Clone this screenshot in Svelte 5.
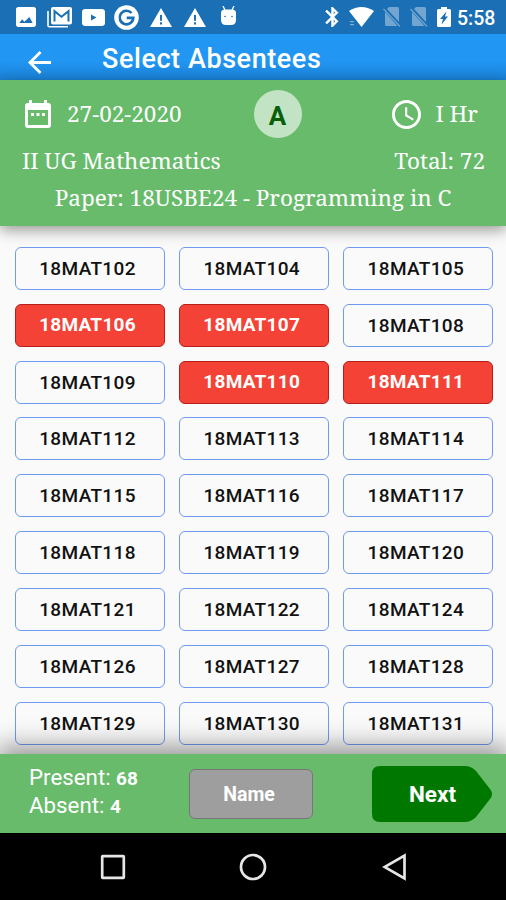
<script>
  const absent = new Set([106, 107, 110, 111]);
  const numbers = [
    102, 104, 105, 106, 107, 108, 109, 110, 111, 112, 113, 114, 115, 116, 117,
    118, 119, 120, 121, 122, 124, 126, 127, 128, 129, 130, 131
  ];
  const warning = 'M1 21L12 2l11 19zm12-2.500v-2.200h-2v2.200zm0-3.700V9h-2v5.800z';
</script>

<div class="screen">
  <div class="status">
    <div class="icons left">
      <svg class="photo" viewBox="3 3 18 18"><path d="M21 19V5c0-1.1-.9-2-2-2H5c-1.1 0-2 .9-2 2v14c0 1.1.9 2 2 2h14c1.1 0 2-.9 2-2zM6 17.500l2.500-3.500 2 2.200 1.500-1.200 3-3 3 5.500z" /></svg>
      <svg class="gmail" viewBox="0 0 25 21">
        <path d="M1 4v14.500a1.300 1.300 0 0 0 1.300 1.300H21" fill="none" stroke="#fff" stroke-width="1.600" />
        <rect x="4" y="0" width="21" height="17.500" rx="2" />
        <path d="M7.500 14.500V4.200l7 5.600 7-5.600v10.300" fill="none" stroke="#1b6fb5" stroke-width="2" />
      </svg>
      <svg class="tube" viewBox="0 0 23 17"><path fill-rule="evenodd" d="M3.500 0h16Q23 0 23 3v11q0 3-3.500 3h-16Q0 17 0 14V3Q0 0 3.500 0zM9 5.500v6l5.500-3z" /></svg>
      <svg class="google" viewBox="0 0 25 25">
        <circle cx="12.500" cy="12.500" r="12.300" />
        <path d="M17.600 8A6.800 6.800 0 1 0 19.300 12.900H12.700" fill="none" stroke="#1b6fb5" stroke-width="2.600" />
      </svg>
      <svg class="warn first" viewBox="1 2 22 19"><path fill-rule="evenodd" d={warning} /></svg>
      <svg class="warn" viewBox="1 2 22 19"><path fill-rule="evenodd" d={warning} /></svg>
      <svg class="robot" viewBox="0 0 17 20">
        <path d="M3 0l2 4M14 0l-2 4" stroke="#fff" stroke-width="1.300" />
        <path d="M1 7q0-3.500 4-3.500h7q4 0 4 3.500v7q0 5-5 5H6q-5 0-5-5z" />
        <circle cx="5" cy="10.500" r=".8" fill="#1b6fb5" /><circle cx="12" cy="10.500" r=".8" fill="#1b6fb5" />
      </svg>
    </div>
    <div class="icons right">
      <svg class="bt" viewBox="4.500 2 14 20"><path d="M17.710 7.710L12 2h-1v7.590L6.410 5 5 6.410 10.590 12 5 17.590 6.410 19 11 14.410V22h1l5.710-5.710-4.300-4.290 4.300-4.290zM13 5.830l1.880 1.880L13 9.590V5.830zm1.880 10.460L13 18.170v-3.760l1.880 1.880z" stroke="#fff" stroke-width=".5" /></svg>
      <svg class="wifi" viewBox="0 0 25 20"><path d="M0 4Q12.500-4 25 4L12.500 20z" /><path d="M1 14h4v1.300H1zM1 17h4v1.300H1z" opacity=".45" /></svg>
      {#each [0, 1] as sim (sim)}
        <svg class="sim" viewBox="0 0 18 20"><path d="M6 0h8.500q1.500 0 1.500 1.500V15L4 2zM2 5l12.500 14H3.500Q2 19 2 17.500z" /><path d="M.5 2L17 19.500" stroke="#fff" stroke-width="1.200" /></svg>
      {/each}
      <svg class="battery" viewBox="0 0 14 20"><path fill-rule="evenodd" d="M4 0h6v2h2.500Q14 2 14 3.500v15q0 1.500-1.500 1.500h-11Q0 20 0 18.500v-15Q0 2 1.500 2H4zM9.500 4.500L3 12h3l-1.500 5.500 6.500-8H8z" /></svg>
      <span class="clock">5:58</span>
    </div>
  </div>

  <header>
    <svg class="back" viewBox="4 4 16 16"><path d="M20 11H7.830l5.590-5.590L12 4l-8 8 8 8 1.410-1.410L7.830 13H20v-2z" /></svg>
    <h1>Select Absentees</h1>
  </header>

  <section class="info">
    <div class="line top">
      <div class="item">
        <svg class="cal" viewBox="0 0 26 28"><path fill-rule="evenodd" d="M4 0h3v3h12V0h3v3h1q3 0 3 3v19q0 3-3 3H3q-3 0-3-3V6q0-3 3-3h1zM3 10v15h20V10zM6 13h3v3H6zM11.500 13h3v3h-3zM17 13h3v3h-3z" /></svg>
        <span>27-02-2020</span>
      </div>
      <div class="badge">A</div>
      <div class="item">
        <svg class="time" viewBox="2 2 20 20"><path d="M11.990 2C6.470 2 2 6.480 2 12s4.470 10 9.990 10C17.520 22 22 17.520 22 12S17.520 2 11.990 2zM12 20c-4.420 0-8-3.580-8-8s3.580-8 8-8 8 3.580 8 8-3.580 8-8 8zm.5-13H11v6l5.250 3.150.75-1.230-4.500-2.670z" /></svg>
        <span>I Hr</span>
      </div>
    </div>
    <div class="line second"><span>II UG Mathematics</span><span>Total: 72</span></div>
    <div class="line paper"><span>Paper: 18USBE24 - Programming in C</span></div>
  </section>

  <main>
    {#each numbers as n (n)}
      <button class:absent={absent.has(n)}>18MAT{n}</button>
    {/each}
  </main>

  <footer>
    <div class="counts">
      <div>Present: <b>68</b></div>
      <div>Absent: <b>4</b></div>
    </div>
    <button class="name">Name</button>
    <button class="next">
      <svg viewBox="0 0 121 56"><path d="M8 0H93Q99 0 104 5L118 23Q122 28 118 33L104 51Q99 56 93 56H8Q0 56 0 48V8Q0 0 8 0z" /></svg>
      <span>Next</span>
    </button>
  </footer>

  <nav>
    <svg viewBox="0 0 26 26"><rect x="2.200" y="2.200" width="21.600" height="21.600" rx=".5" /></svg>
    <svg viewBox="0 0 28 28"><circle cx="14" cy="14" r="12" /></svg>
    <svg viewBox="0 0 25 28"><path d="M22.500 2.500v23L2.500 14z" /></svg>
  </nav>
</div>

<style>
  .screen {
    width: 506px;
    height: 900px;
    overflow: hidden;
    display: flex;
    flex-direction: column;
    background: #fafafa;
    font-family: Roboto, sans-serif;
    color: #fff;
  }
  svg { display: block; flex: none; fill: #fff; }
  button { font-family: inherit; padding: 0; cursor: pointer; }
  .status {
    height: 34px;
    flex: none;
    display: flex;
    justify-content: space-between;
    background: #1b6fb5;
  }
  .icons { display: flex; align-items: center; }
  .left { padding-left: 16px; }
  .photo { width: 20px; }
  .gmail { width: 25px; margin-left: 11px; }
  .tube { width: 23px; margin-left: 10px; }
  .google { width: 25px; margin-left: 9px; }
  .warn { width: 22px; margin-left: 12px; }
  .warn.first { margin-left: 11px; }
  .robot { width: 17px; margin: -2px 0 0 14px; }
  .right { padding-right: 11px; }
  .bt { width: 14px; }
  .wifi { width: 25px; margin-left: 10px; }
  .sim { width: 18px; margin-left: 9px; opacity: .38; }
  .battery { width: 14px; margin-left: 9px; }
  .clock { margin-left: 6px; width: 38px; font-size: 19.500px; font-weight: 500; line-height: 34px; padding-top: 3px; white-space: nowrap; }

  header {
    height: 46px;
    flex: none;
    display: flex;
    background: linear-gradient(#2196f3, #2196f3 58%, #1b82d6);
  }
  .back { width: 23px; height: 23px; margin: 17px 0 0 28px; }
  h1 { margin: 9px 0 0 51px; font-size: 27px; line-height: 32px; font-weight: 500; letter-spacing: .57px; white-space: nowrap; }

  .info {
    height: 146px;
    flex: none;
    box-sizing: border-box;
    padding-top: 10px;
    background: #68bb6b;
    box-shadow: 0 4px 14px rgba(0, 0, 0, .4);
    font: 22.500px/30px "Noto Serif", "DejaVu Serif Condensed", "DejaVu Serif", serif;
    font-stretch: condensed;
    z-index: 1;
  }
  .line { display: flex; justify-content: space-between; white-space: nowrap; }
  .top { height: 48px; align-items: center; padding: 0 28px 0 25px; }
  .item { display: flex; align-items: center; }
  .item span { margin-top: -1px; }
  .cal { width: 26px; margin-right: 16px; }
  .badge {
    width: 48px;
    height: 48px;
    margin-right: 19px;
    border-radius: 50%;
    background: #c3e4c4;
    color: #075e0b;
    font: 700 26px/52px Roboto, sans-serif;
    text-align: center;
  }
  .time { width: 29px; margin-right: 14px; }
  .second { margin-top: 8px; padding: 0 21px 0 22px; }
  .paper { justify-content: center; margin-top: 7px; }

  main {
    height: 528px;
    flex: none;
    box-sizing: border-box;
    padding: 20.800px 13px 0 14.500px;
    display: grid;
    grid-template-columns: repeat(3, 150px);
    grid-auto-rows: 43px;
    gap: 13.880px 14.200px;
    overflow: hidden;
  }
  main button {
    border: 1.500px solid #709af2;
    border-radius: 6px;
    background: transparent;
    color: #111;
    font-size: 19px;
    font-weight: 500;
    letter-spacing: .35px;
    padding: 0 4px 0 0;
  }
  main .absent { background: #f44336; border-color: #b51e19; color: #fff; font-weight: 700; letter-spacing: .25px; padding-bottom: 1px; }

  footer {
    height: 79px;
    flex: none;
    display: flex;
    align-items: center;
    background: #68bb6b;
    box-shadow: 0 -5px 24px 3px rgba(0, 0, 0, .4);
    z-index: 1;
  }
  .counts { width: 160px; margin: -3px 0 0 29px; font-size: 22.300px; line-height: 27px; white-space: nowrap; }
  .counts b { font-size: 19px; }
  .name {
    width: 124px;
    height: 50px;
    border: 1.500px solid #777;
    border-radius: 6px;
    background: #9e9e9e;
    color: #fff;
    font-size: 19.500px;
    font-weight: 700;
    padding: 1px 4px 0 0;
  }
  .next {
    width: 121px;
    height: 56px;
    margin-left: 59px;
    border: 0;
    background: none;
    color: #fff;
    display: grid;
    align-items: center;
    font-size: 22.500px;
    font-weight: 700;
  }
  .next svg, .next span { grid-area: 1 / 1; }
  .next svg { width: 121px; fill: #007800; }
  .next span { z-index: 1; }

  nav {
    height: 67px;
    flex: none;
    background: #000;
    display: flex;
    align-items: center;
    padding-left: 100px;
    z-index: 2;
  }
  nav svg { fill: none; stroke: #e6e6e6; stroke-width: 2.700; }
  nav svg:nth-child(1) { width: 26px; }
  nav svg:nth-child(2) { width: 28px; margin-left: 113px; }
  nav svg:nth-child(3) { width: 25px; margin-left: 115px; }
</style>
